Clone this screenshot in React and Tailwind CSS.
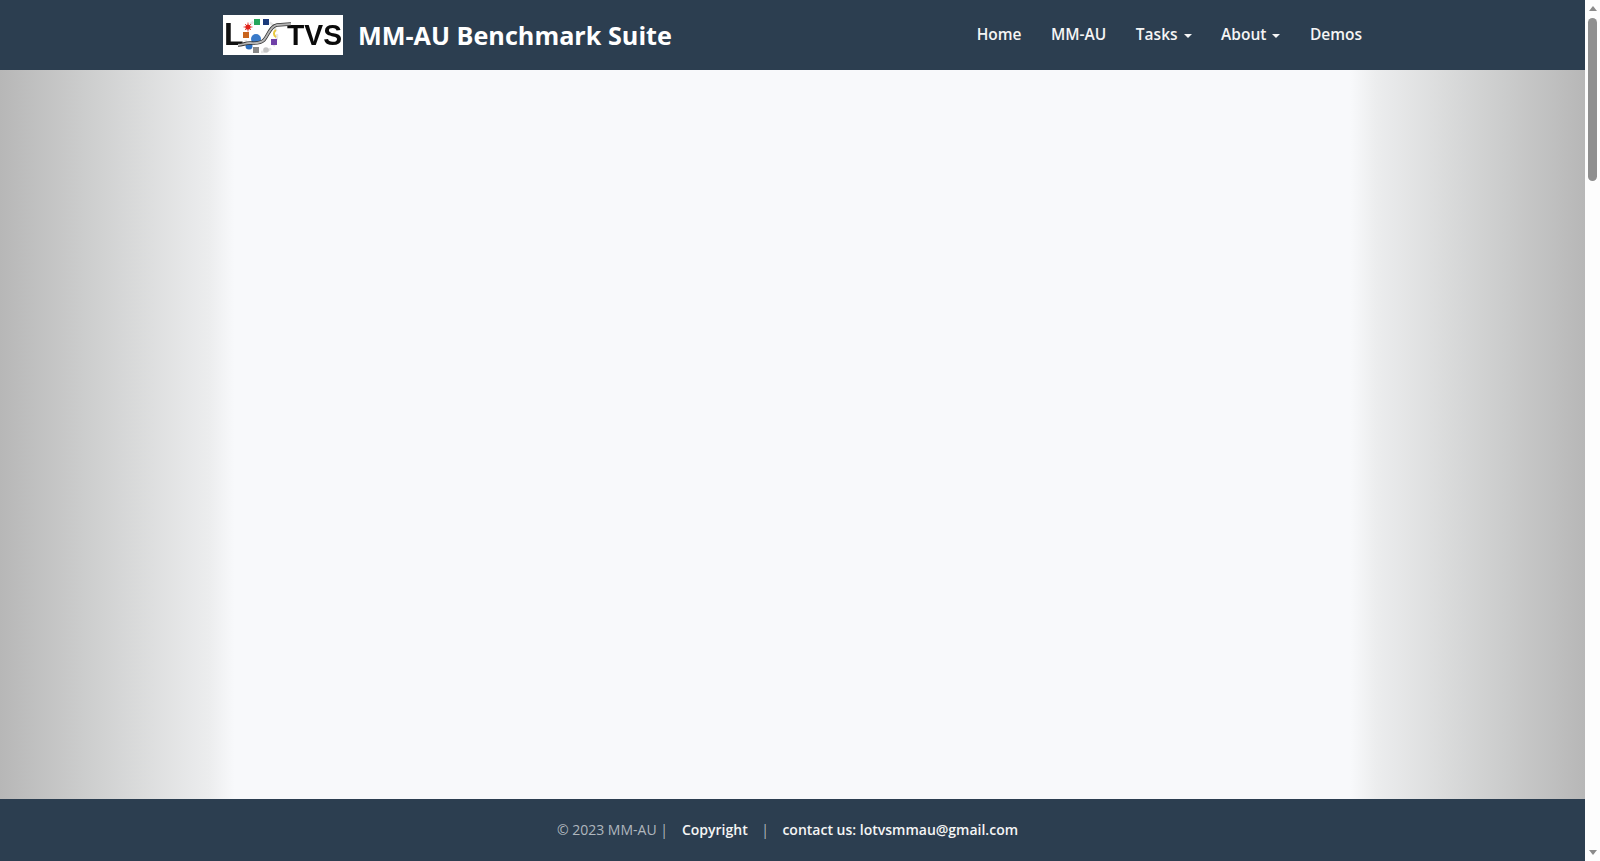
export default function App() {
  const road = "M15 30 C20 30 22 28 27 28 C32 28 37 29 41 25 C45 21 47 11 54 10 L68 9";
  return (
    <div className="flex h-[861px] w-full overflow-hidden font-['Open_Sans',sans-serif]">
      <div className="flex min-w-0 flex-1 flex-col">
        <header className="flex h-[70px] shrink-0 items-center bg-[#2c3e50] px-[223px]">
          <svg width="120" height="40" viewBox="0 0 120 40" className="shrink-0 blur-[0.35px]">
            <rect width="120" height="40" fill="#fff" />
            <text x="1" y="30" fontFamily="Liberation Sans" fontWeight="700" fontSize="32" fill="#111">L</text>
            <text x="64" y="30" fontFamily="Liberation Sans" fontWeight="700" fontSize="29" textLength="55" lengthAdjust="spacingAndGlyphs" fill="#0a0a0a">TVS</text>
            <circle cx="38" cy="21" r="16" fill="none" stroke="#e6e6e6" strokeWidth="2.5" strokeDasharray="4 3" />
            <circle cx="33" cy="24" r="5" fill="#3a7ac8" />
            <circle cx="26" cy="31" r="3.5" fill="#2a6ec0" />
            <path d={road} fill="none" stroke="#333" strokeWidth="3.4" />
            <path d={road} fill="none" stroke="#b5b5b5" strokeWidth="1.8" />
            <rect x="31" y="4" width="6" height="6" fill="#26a65b" />
            <rect x="40" y="4" width="6" height="6" fill="#1a3a7a" />
            <rect x="20" y="17" width="6" height="6" fill="#c8641e" />
            <rect x="48" y="24" width="6" height="6" fill="#7040a8" />
            <rect x="30" y="32" width="6" height="6" fill="#888" />
            <circle cx="43" cy="35" r="2.8" fill="#c4c4c4" />
            <circle cx="25" cy="12" r="2.6" fill="#e2231a" />
            <path d="M25 7.5 L25 16.5 M20.5 12 L29.5 12 M22 9 L28 15 M28 9 L22 15" stroke="#e2231a" strokeWidth="0.8" />
            <path d="M53 15 A4 4 0 0 0 53 22" fill="none" stroke="#e8c840" strokeWidth="2" />
          </svg>
          <span className="mt-[2px] ml-[15px] text-[25.2px] leading-none font-bold whitespace-nowrap text-white">MM-AU Benchmark Suite</span>
          <nav className="ml-auto flex items-center gap-[29.5px] text-[15.5px] font-semibold whitespace-nowrap text-[#f5f5f5]">
            <a>Home</a>
            <a>MM-AU</a>
            <a className="flex items-center">Tasks<i className="mt-[2px] ml-[6px] h-0 w-0 border-x-4 border-t-4 border-x-transparent border-t-[#f5f5f5]" /></a>
            <a className="flex items-center">About<i className="mt-[2px] ml-[6px] h-0 w-0 border-x-4 border-t-4 border-x-transparent border-t-[#f5f5f5]" /></a>
            <a>Demos</a>
          </nav>
        </header>
        <main className="flex-1 bg-[linear-gradient(to_right,#b7b7b7_0,#d0d1d1_6.3%,#ecedee_13.2%,#f8f9fb_14.8%,#f8f9fb_85.2%,#ecedee_86.8%,#d0d1d1_93.7%,#b7b7b7_100%)]" />
        <footer className="flex h-[62px] shrink-0 items-center justify-center bg-[#2c3e50] pr-[10px] pb-[2px] text-[14px] whitespace-nowrap">
          <span className="text-[#b0b7be]">© 2023 MM-AU |</span>
          <a className="ml-[14px] font-semibold text-[#f5f5f5]">Copyright</a>
          <span className="mx-[13.5px] text-[#b0b7be]">|</span>
          <a className="font-semibold text-[#f5f5f5]">contact us: lotvsmmau@gmail.com</a>
        </footer>
      </div>
      <aside className="flex w-[15px] shrink-0 flex-col items-center bg-[#fdfdfd] py-[6px]">
        <i className="h-0 w-0 border-x-[4.5px] border-b-[5px] border-x-transparent border-b-[#8a8a8a]" />
        <i className="mt-[7px] h-[163px] w-[9px] rounded-full bg-[#8f8f8f]" />
        <i className="mt-auto h-0 w-0 border-x-[4.5px] border-t-[5px] border-x-transparent border-t-[#8a8a8a]" />
      </aside>
    </div>
  );
}
